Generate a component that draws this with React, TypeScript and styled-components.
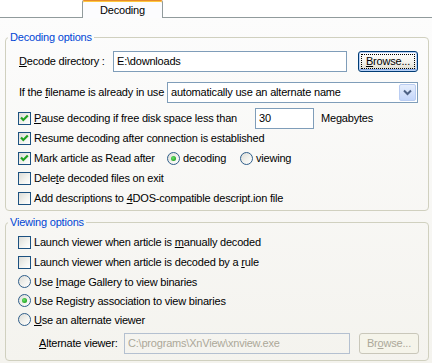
import React from 'react'
import styled, { createGlobalStyle } from 'styled-components'

const GlobalStyle = createGlobalStyle`
    html, body {
        margin: 0;
        padding: 0;
        background: #ffffff;
    }
    body {
        font-family: 'Liberation Sans', Arial, sans-serif;
        font-size: 11px;
        color: #000000;
    }
`

const Window = styled.div`
    width: 432px;
    height: 363px;
    display: flex;
    flex-direction: column;
    overflow: hidden;
    letter-spacing: -0.2px;
`

const TabStrip = styled.div`
    display: flex;
    align-items: flex-end;
    height: 18px;
    background: #ffffff;
`

const TabGap = styled.div<{ $width?: number }>`
    box-sizing: border-box;
    height: 18px;
    border-bottom: 1px solid #919b9c;
    ${(p) => (p.$width ? `width: ${p.$width}px;` : 'flex: 1;')}
`

const Tab = styled.div`
    box-sizing: border-box;
    width: 81px;
    height: 18px;
    display: flex;
    align-items: center;
    justify-content: center;
    padding-top: 1px;
    border: 1px solid #919b9c;
    border-top: 1px solid #e68b2c;
    border-bottom: none;
    border-radius: 2px 2px 0 0;
    box-shadow: inset 0 1px 0 #ffc73c;
    background: #fcfcfe;
`

const Pane = styled.div`
    flex: 1;
    display: flex;
    flex-direction: column;
    gap: 4px;
    padding: 12px 0 0 5px;
    background: linear-gradient(#fcfcfc, #f4f3ee);
`

const Group = styled.fieldset<{ $padTop: number; $padBottom: number }>`
    box-sizing: border-box;
    width: 424px;
    min-width: 0;
    margin: 0;
    padding: ${(p) => p.$padTop}px 0 ${(p) => p.$padBottom}px 0;
    border: 1px solid #d0d0bf;
    border-radius: 4px;
    display: flex;
    flex-direction: column;
`

const Legend = styled.legend`
    margin-left: 2px;
    padding: 0 2px;
    line-height: 14px;
    color: #0046d5;
`

const Row = styled.div<{ $height: number; $top?: number; $indent?: number }>`
    display: flex;
    align-items: center;
    height: ${(p) => p.$height}px;
    margin-top: ${(p) => p.$top ?? 0}px;
    padding-left: ${(p) => p.$indent ?? 12}px;
    white-space: nowrap;
`

const Label = styled.span<{ $width?: number; $disabled?: boolean }>`
    flex: none;
    ${(p) => (p.$width ? `width: ${p.$width}px;` : '')}
    color: ${(p) => (p.$disabled ? '#aca899' : '#000000')};
`

const TextBox = styled.input<{ $width: number }>`
    box-sizing: border-box;
    width: ${(p) => p.$width}px;
    height: 21px;
    margin: 0;
    padding: 0 3px;
    border: 1px solid #7f9db9;
    background: #ffffff;
    font: inherit;
    letter-spacing: inherit;
    color: #000000;
    outline: none;

    &:disabled {
        border-color: #b4c0d0;
        background: transparent;
        color: #aca899;
    }
`

const Button = styled.button<{ $isDefault?: boolean }>`
    box-sizing: border-box;
    flex: none;
    display: flex;
    width: 60px;
    height: 21px;
    margin-left: ${(p) => (p.$isDefault ? 11 : 9)}px;
    padding: 2px;
    border: 1px solid #003c74;
    border-radius: 3px;
    background: linear-gradient(#ffffff, #f3f2ec 55%, #dcd9cb);
    box-shadow: ${(p) => (p.$isDefault ? 'inset 0 0 0 1px #b9d1f6, inset 0 -1px 0 1px #85a9e8' : 'none')};
    font: inherit;
    letter-spacing: inherit;
    color: #000000;

    &:disabled {
        border-color: #c9c7ba;
        background: #f5f4ea;
        color: #aca899;
    }
`

const ButtonFace = styled.span<{ $focused?: boolean }>`
    flex: 1;
    display: flex;
    align-items: center;
    justify-content: center;
    border: 1px dotted ${(p) => (p.$focused ? '#000000' : 'transparent')};
`

const ComboBox = styled.div`
    box-sizing: border-box;
    width: 251px;
    height: 21px;
    display: flex;
    align-items: center;
    padding: 1px 1px 1px 3px;
    border: 1px solid #7f9db9;
    background: #ffffff;
`

const ComboText = styled.span`
    flex: 1;
`

const DropButton = styled.span`
    box-sizing: border-box;
    width: 17px;
    height: 17px;
    display: flex;
    align-items: center;
    justify-content: center;
    border: 1px solid #bacdf2;
    border-radius: 2px;
    background: linear-gradient(#e6eefc, #c4d6fb);
`

const Box = styled.span`
    box-sizing: border-box;
    flex: none;
    width: 13px;
    height: 13px;
    margin-right: 3px;
    display: flex;
    align-items: center;
    justify-content: center;
    border: 1px solid #1c5180;
    background: linear-gradient(135deg, #dcdcd7 0%, #f2f2ee 55%, #ffffff 100%);
`

const Circle = styled(Box)`
    border-radius: 50%;
    border-color: #2f5e8a;
`

const Dot = styled.span`
    width: 5px;
    height: 5px;
    border-radius: 50%;
    background: radial-gradient(circle at 40% 40%, #6ae36a, #21a121 75%);
`

const Option = styled.span<{ $width?: number }>`
    display: flex;
    align-items: center;
    ${(p) => (p.$width ? `width: ${p.$width}px;` : '')}
`

function CheckBox({ checked }: { checked?: boolean }) {
    return (
        <Box>
            {checked ? (
                <svg width="11" height="11" viewBox="0 0 11 11">
                    <path d="M2 4.5 L4.3 7 L8.8 2.5" fill="none" stroke="#21a121" strokeWidth="2.2" />
                </svg>
            ) : null}
        </Box>
    )
}

function Radio({ checked }: { checked?: boolean }) {
    return <Circle>{checked ? <Dot /> : null}</Circle>
}

function Chevron() {
    return (
        <svg width="9" height="7" viewBox="0 0 9 7">
            <path d="M1 1.5 L4.5 5 L8 1.5" fill="none" stroke="#4d6185" strokeWidth="2" />
        </svg>
    )
}

export default function App() {
    return (
        <Window>
            <GlobalStyle />
            <TabStrip>
                <TabGap $width={82} />
                <Tab>Decoding</Tab>
                <TabGap />
            </TabStrip>
            <Pane>
                <Group $padTop={6} $padBottom={2}>
                    <Legend>Decoding options</Legend>
                    <Row $height={22} $indent={13}>
                        <Label $width={94}>
                            <u>D</u>ecode directory :
                        </Label>
                        <TextBox $width={234} readOnly value="E:\downloads" />
                        <Button $isDefault>
                            <ButtonFace $focused>
                                <u>B</u>rowse...
                            </ButtonFace>
                        </Button>
                    </Row>
                    <Row $height={22} $top={9} $indent={13}>
                        <Label $width={148}>
                            If the <u>f</u>ilename is already in use
                        </Label>
                        <ComboBox>
                            <ComboText>automatically use an alternate name</ComboText>
                            <DropButton>
                                <Chevron />
                            </DropButton>
                        </ComboBox>
                    </Row>
                    <Row $height={20} $top={5}>
                        <CheckBox checked />
                        <Label $width={221}>
                            <u>P</u>ause decoding if free disk space less than
                        </Label>
                        <TextBox $width={59} readOnly value="30" />
                        <Label style={{ marginLeft: 7 }}>Megabytes</Label>
                    </Row>
                    <Row $height={20}>
                        <CheckBox checked />
                        <Label>Resume decoding after connection is established</Label>
                    </Row>
                    <Row $height={20}>
                        <CheckBox checked />
                        <Label $width={133}>Mark article as Read after</Label>
                        <Option $width={73}>
                            <Radio checked />
                            decoding
                        </Option>
                        <Option>
                            <Radio />
                            viewing
                        </Option>
                    </Row>
                    <Row $height={20}>
                        <CheckBox />
                        <Label>
                            Dele<u>t</u>e decoded files on exit
                        </Label>
                    </Row>
                    <Row $height={20}>
                        <CheckBox />
                        <Label>
                            Add descriptions to <u>4</u>DOS-compatible descript.ion file
                        </Label>
                    </Row>
                </Group>
                <Group $padTop={3} $padBottom={6}>
                    <Legend>Viewing options</Legend>
                    <Row $height={20}>
                        <CheckBox />
                        <Label>
                            Launch viewer when article is <u>m</u>anually decoded
                        </Label>
                    </Row>
                    <Row $height={20}>
                        <CheckBox />
                        <Label>
                            Launch viewer when article is decoded by a <u>r</u>ule
                        </Label>
                    </Row>
                    <Row $height={19}>
                        <Radio />
                        <Label>
                            Use <u>I</u>mage Gallery to view binaries
                        </Label>
                    </Row>
                    <Row $height={19}>
                        <Radio checked />
                        <Label>Use Registry association to view binaries</Label>
                    </Row>
                    <Row $height={19}>
                        <Radio />
                        <Label>
                            <u>U</u>se an alternate viewer
                        </Label>
                    </Row>
                    <Row $height={22} $top={3} $indent={33}>
                        <Label $width={85}>
                            <u>A</u>lternate viewer:
                        </Label>
                        <TextBox $width={226} disabled value="C:\programs\XnView\xnview.exe" />
                        <Button disabled>
                            <ButtonFace>
                                Br<u>o</u>wse...
                            </ButtonFace>
                        </Button>
                    </Row>
                </Group>
            </Pane>
        </Window>
    )
}
